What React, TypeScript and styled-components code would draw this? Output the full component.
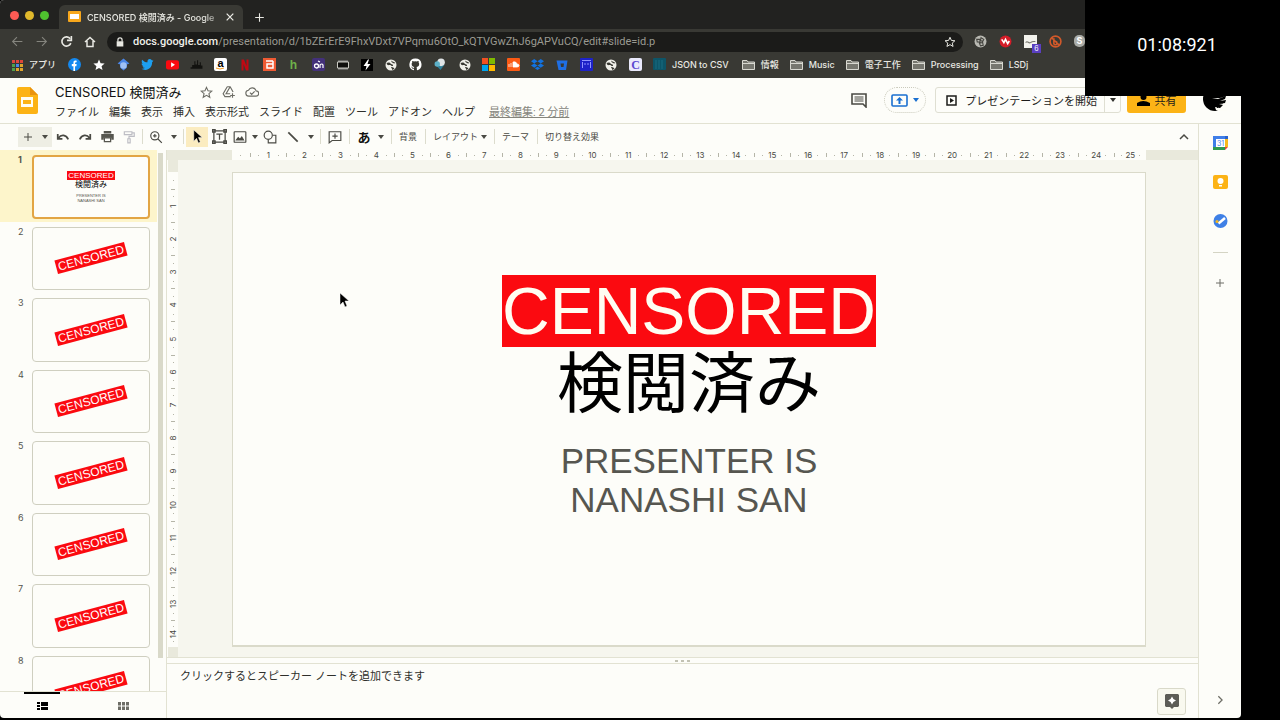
import React from "react";
import styled, { createGlobalStyle, css } from "styled-components";

const c = {
  page: "#fdfdf9",
  ink: "#2f2f2b",
  mute: "#6d6d66",
  line: "#e2e2d2",
  frame: "#222220",
  chrome: "#393934",
  field: "#1b1b19",
  canvas: "#f6f6ee",
  ruler: "#e9e9dc",
  red: "#fb0a10",
  amber: "#fcb316",
};

const Global = createGlobalStyle`
  *, *::before, *::after { box-sizing: border-box; }
  body { margin: 0; background: #000; color: ${c.ink}; overflow: hidden;
    font-family: Inter, "Noto Sans CJK JP", sans-serif; font-size: 11px; }
  button, input { font: inherit; color: inherit; border: 0; padding: 0; margin: 0; background: none; }
  a { color: inherit; text-decoration: none; }
  ul, ol { list-style: none; margin: 0; padding: 0; }
  h1, h2, p { margin: 0; font-weight: 400; }
  svg { display: block; flex: none; }
`;

const Screen = styled.div`
  display: flex;
  height: 100vh;
  padding: 0 39px 2px 0;
  background: #000;
`;
const Window = styled.div`
  flex: 1;
  min-width: 0;
  display: flex;
  flex-direction: column;
  overflow: hidden;
  background: ${c.page};
  border-radius: 4px;
`;
const Row = styled.div`
  display: flex;
  align-items: center;
`;

/* ---------- browser ---------- */
const TabStrip = styled(Row)`
  flex: none;
  height: 29px;
  padding: 5px 10px 0;
  background: ${c.frame};
  color: #e8e8e2;
`;
const Lights = styled(Row)`
  gap: 6px;
  width: 49px;
  padding-bottom: 4px;
`;
const Light = styled.span<{ $color: string }>`
  width: 9px;
  height: 9px;
  border-radius: 50%;
  background: ${(p) => p.$color};
`;
const Tab = styled(Row)`
  width: 184px;
  height: 24px;
  padding: 0 8px 0 9px;
  gap: 6px;
  border-radius: 6px 6px 0 0;
  background: ${c.chrome};
`;
const TabTitle = styled.span`
  flex: 1;
  min-width: 0;
  white-space: nowrap;
  font-size: 9px;
  font-weight: 500;
  mask-image: linear-gradient(90deg, #000 88%, #0006);
`;
const IconButton = styled.button<{ $w?: number; $h?: number }>`
  display: flex;
  flex: none;
  align-items: center;
  justify-content: center;
  width: ${(p) => p.$w ?? 22}px;
  height: ${(p) => p.$h ?? 20}px;
`;
const NavBar = styled(Row)`
  flex: none;
  height: 25px;
  padding-left: 5px;
  background: ${c.chrome};
  color: #e8e8e2;
`;
const DimIcon = styled.span`
  color: #85857e;
`;
const Address = styled.div`
  display: flex;
  align-items: center;
  flex: 1;
  min-width: 0;
  max-width: 856px;
  height: 20px;
  margin-left: 5px;
  padding: 0 4px 0 8px;
  gap: 8px;
  border-radius: 10px;
  background: ${c.field};
  font-family: Roboto, sans-serif;
  font-size: 11px;
`;
const Url = styled.span`
  flex: 1;
  white-space: nowrap;
  color: #9a9a92;
  b { font-weight: 500; color: #f0f0ea; }
`;
const Extensions = styled(Row)`
  margin-left: 5px;
`;
const Bookmarks = styled(Row)`
  flex: none;
  height: 24px;
  padding: 0 0 3px 11px;
  background: ${c.chrome};
  color: #e8e8e2;
  font-size: 9px;
  font-weight: 500;
  white-space: nowrap;
`;
const Apps = styled.a`
  display: flex;
  align-items: center;
  gap: 6px;
  width: 51px;
`;
const Sites = styled.nav`
  display: flex;
  justify-content: space-between;
  width: 598px;
  margin-left: 6px;
`;
const Site = styled.a`
  display: flex;
  width: 13px;
  height: 13px;
  justify-content: center;
  align-items: center;
`;
const JsonLink = styled.a`
  margin: 0 2px 0 6px;
`;
const Folder = styled.a`
  display: flex;
  align-items: center;
  gap: 6px;
  margin-left: 11px;
`;

/* ---------- document header ---------- */
const Header = styled.header`
  display: flex;
  flex: none;
  height: 46px;
  padding: 0 14px 0 17px;
  border-bottom: 1px solid ${c.line};
`;
const LogoBox = styled.span`
  padding-top: 9px;
`;
const Titles = styled.div`
  flex: 1;
  min-width: 0;
  padding: 5px 0 0 17px;
`;
const TitleRow = styled(Row)`
  height: 18px;
  gap: 9px;
  color: ${c.mute};
`;
const Title = styled.h1`
  margin-right: 9px;
  color: #111;
  font-size: 13px;
  line-height: 18px;
  white-space: nowrap;
`;
const Menu = styled.nav`
  display: flex;
  align-items: center;
  gap: 10px;
  height: 22px;
  white-space: nowrap;
`;
const MenuItem = styled.button`
  font-size: 11px;
  line-height: 16px;
`;
const LastEdit = styled.a`
  margin: 0 0 3px 4px;
  font-family: Roboto, "Noto Sans CJK JP", sans-serif;
  font-size: 11px;
  color: #85857c;
  text-decoration: underline;
`;
const Actions = styled.div`
  display: flex;
  align-items: flex-start;
  padding-top: 9px;
`;
const Pill = styled.button`
  display: flex;
  align-items: center;
  justify-content: center;
  gap: 5px;
  width: 42px;
  height: 26px;
  margin: 0 9px 0 15px;
  border: 1px dotted #c9c9bb;
  border-radius: 13px;
  color: #1a6fd0;
`;
const Split = styled.div`
  display: flex;
  height: 26px;
  border: 1px solid #dfdfd2;
  border-radius: 3px;
`;
const Present = styled.button`
  display: flex;
  align-items: center;
  gap: 8px;
  padding: 0 7px 0 10px;
  border-right: 1px solid #dfdfd2;
  white-space: nowrap;
  color: #1c1c1a;
`;
const Share = styled.button`
  display: flex;
  align-items: center;
  justify-content: center;
  gap: 5px;
  width: 59px;
  height: 26px;
  margin: 0 17px 0 6px;
  border-radius: 3px;
  background: ${c.amber};
  color: #1c1c1a;
`;

/* ---------- toolbar ---------- */
const Below = styled.div`
  flex: 1;
  min-height: 0;
  display: flex;
`;
const Editor = styled.div`
  flex: 1;
  min-width: 0;
  display: flex;
  flex-direction: column;
`;
const Toolbar = styled(Row)`
  flex: none;
  height: 26px;
  padding: 0 3px 1px 18px;
  color: #4a4a44;
`;
const Tool = styled(IconButton)<{ $bg?: string }>`
  background: ${(p) => p.$bg ?? "none"};
`;
const ToolPair = styled.span`
  display: flex;
  align-items: center;
  gap: 8px;
`;
const TextTool = styled.button<{ $caret?: boolean }>`
  display: flex;
  align-items: center;
  gap: 3px;
  padding: 0 ${(p) => (p.$caret ? 3 : 4)}px 0 4px;
  font-size: 9px;
  white-space: nowrap;
`;
const Sep = styled.span<{ $w: number }>`
  display: flex;
  justify-content: center;
  width: ${(p) => p.$w}px;
  &::before { content: ""; width: 1px; height: 15px; background: #dcdccd; }
`;
const Kana = styled.b`
  font-size: 13px;
  color: #111;
`;
const Grow = styled.span`
  flex: 1;
`;

/* ---------- filmstrip ---------- */
const Work = styled.div`
  flex: 1;
  min-height: 0;
  display: flex;
`;
const Film = styled.aside`
  display: flex;
  flex-direction: column;
  flex: none;
  width: 167px;
  border-right: 1px solid ${c.line};
`;
const FilmBody = styled.div`
  flex: 1;
  min-height: 0;
  display: flex;
  overflow: hidden;
`;
const Scroll = styled.span`
  width: 5px;
  height: 505px;
  margin: 3px 0 0 1px;
  background: #d9d9c9;
`;
const SlideList = styled.ol`
  display: grid;
  grid-template-rows: repeat(8, 1fr);
  height: 572px;
  width: 157px;
`;
const SlideItem = styled.li<{ $on?: boolean }>`
  display: flex;
  padding: 5px 7px 3px 0;
  background: ${(p) => (p.$on ? "#fdf5cb" : "none")};
`;
const Num = styled.span<{ $on?: boolean }>`
  width: 32px;
  padding-left: 18px;
  font-size: 9px;
  line-height: 10px;
  font-weight: ${(p) => (p.$on ? 700 : 400)};
  color: #55554e;
`;
const Thumb = styled.button<{ $on?: boolean }>`
  display: flex;
  flex: 1;
  flex-direction: column;
  align-items: center;
  justify-content: center;
  border: ${(p) => (p.$on ? "2px solid #e2a544" : "1px solid #cfcfc0")};
  border-radius: 4px;
  background: ${c.page};
  font-family: "Liberation Sans", "Noto Sans CJK JP", sans-serif;
`;
const Stamp = styled.span`
  padding: 0 2px;
  background: ${c.red};
  color: #fff;
  font-size: 12px;
  line-height: 14px;
  transform: rotate(-15deg);
`;
const MiniTag = styled.span`
  padding: 0 1px;
  background: ${c.red};
  color: #fff;
  font-size: 8px;
  line-height: 9px;
`;
const MiniTitle = styled.span`
  font-size: 8px;
  line-height: 10px;
  color: #000;
`;
const MiniSub = styled.span`
  padding-top: 3px;
  font-size: 4px;
  line-height: 5px;
  color: #55554e;
`;
const ViewBar = styled.div`
  display: flex;
  flex: none;
  height: 27px;
  padding-left: 24px;
  border-top: 1px solid ${c.line};
`;
const View = styled.button<{ $on?: boolean }>`
  display: flex;
  flex: none;
  align-items: center;
  justify-content: center;
  width: 36px;
  margin-right: 45px;
  border-top: 2px solid ${(p) => (p.$on ? "#000" : "transparent")};
  color: ${(p) => (p.$on ? "#000" : c.mute)};
`;

/* ---------- stage ---------- */
const Stage = styled.main`
  flex: 1;
  min-width: 0;
  display: flex;
  flex-direction: column;
  font-family: "Liberation Sans", "Noto Sans CJK JP", sans-serif;
`;
const HRuler = styled.div`
  display: flex;
  flex: none;
  height: 10px;
  padding: 0 52px 0 65px;
  background: ${c.ruler};
`;
const VRuler = styled.div`
  display: flex;
  flex-direction: column;
  flex: none;
  width: 10px;
  margin-left: 1px;
  padding: 12px 0 10px;
  background: ${c.ruler};
`;
const Cell = styled.span<{ $v?: boolean; $size: number }>`
  display: flex;
  flex: ${(p) => p.$size} 1 0;
  flex-direction: ${(p) => (p.$v ? "column" : "row")};
  min-width: 0;
  min-height: 0;
  align-items: center;
  justify-content: space-between;
  background: ${c.page};
  font-family: Inter, sans-serif;
  font-size: 8px;
  line-height: 8px;
  color: #4a4a44;
`;
const Tick = styled.i<{ $v?: boolean; $long?: boolean }>`
  flex: none;
  background: #b5b5a8;
  ${(p) => {
    const len = p.$long ? 4 : 1;
    return p.$v
      ? css`height: 1px; width: ${len}px;`
      : css`width: 1px; height: ${len}px;`;
  }}
`;
const Mark = styled.span<{ $v?: boolean }>`
  display: flex;
  flex: none;
  align-items: center;
  justify-content: center;
  width: 4px;
  height: 4px;
  transform: rotate(${(p) => (p.$v ? -90 : 0)}deg);
`;
const CanvasRow = styled.div`
  flex: 1;
  min-height: 0;
  display: flex;
`;
const Canvas = styled.div`
  flex: 1;
  min-width: 0;
  display: flex;
  padding: 12px 52px 10px 54px;
  background: ${c.canvas};
`;
const Slide = styled.section`
  flex: 1;
  display: flex;
  flex-direction: column;
  align-items: center;
  justify-content: center;
  padding-bottom: 25px;
  border: 1px solid #dadaca;
  border-bottom-width: 2px;
  background: ${c.page};
  text-align: center;
`;
const Censored = styled.h2`
  background: ${c.red};
  color: #fffdf2;
  font-size: 66px;
  line-height: 72px;
`;
const Heading = styled.h2`
  color: #000;
  font-size: 66px;
  line-height: 74px;
`;
const Presenter = styled.p`
  padding-top: 20px;
  color: #565650;
  font-size: 35px;
  line-height: 39px;
`;
const Handle = styled(Row)`
  flex: none;
  justify-content: center;
  gap: 3px;
  height: 7px;
  border: 1px solid ${c.line};
  border-width: 1px 0;
  span { width: 3px; height: 2px; background: #c2c2b3; }
`;
const Notes = styled.div`
  display: flex;
  flex: none;
  height: 54px;
  padding: 4px 12px 0 13px;
  p { flex: 1; font-size: 11px; line-height: 16px; }
`;
const Explore = styled.button`
  display: flex;
  align-items: center;
  justify-content: center;
  width: 29px;
  height: 27px;
  margin-top: 20px;
  border: 1px solid #d9d9c9;
  border-radius: 3px;
  background: #f9f9ef;
`;

/* ---------- side panel ---------- */
const Side = styled.aside`
  display: flex;
  flex-direction: column;
  align-items: center;
  flex: none;
  width: 43px;
  padding-top: 9px;
  border-left: 1px solid ${c.line};
  color: ${c.mute};
  button { margin-bottom: 19px; }
  hr { width: 15px; margin: 2px 0 20px; border: 0; border-top: 1px solid #d4d4c4; }
  button:last-child { margin-top: auto; margin-bottom: 8px; }
`;

/* ---------- overlays ---------- */
const Clock = styled.div`
  position: absolute;
  top: 0;
  right: 0;
  display: flex;
  align-items: center;
  justify-content: center;
  width: 195px;
  height: 96px;
  padding: 0 11px 7px 0;
  background: #000;
  color: #fff;
  font-family: Roboto, sans-serif;
  font-size: 18px;
  line-height: 24px;
`;
const Pointer = styled.span`
  position: absolute;
  left: 337px;
  top: 293px;
`;
const Badge = styled.span`
  position: absolute;
  right: -4px;
  bottom: -5px;
  width: 9px;
  height: 9px;
  background: #5a3fc0;
  color: #fff;
  font-size: 7px;
  line-height: 9px;
`;
const Ext = styled.button`
  position: relative;
  display: flex;
  width: 13px;
  height: 13px;
  margin: 0 6px;
`;

/* ---------- drawings ---------- */
type IcoProps = { s?: number; w?: number; children: React.ReactNode; fill?: string };
const Ico = ({ s = 14, w = 2, fill = "none", children }: IcoProps) => (
  <svg width={s} height={s} viewBox="0 0 24 24" fill={fill} stroke={fill === "none" ? "currentColor" : "none"} strokeWidth={w} aria-hidden="true">
    {children}
  </svg>
);
const Caret = () => (
  <svg width="6" height="4" viewBox="0 0 6 4" aria-hidden="true"><path d="M0 0h6L3 4z" fill="currentColor" /></svg>
);
const Star = ({ s = 13 }: { s?: number }) => (
  <Ico s={s}><path d="M12 2.5l2.800 6.400 7 .6-5.300 4.600 1.600 6.800L12 17.300l-6.100 3.600 1.600-6.800L2.200 9.500l7-.6z" /></Ico>
);
const Plus = ({ s = 14 }: { s?: number }) => <Ico s={s}><path d="M12 4v16M4 12h16" /></Ico>;
const SlidesMark = () => (
  <svg width="13" height="12" viewBox="0 0 13 12" aria-hidden="true">
    <rect width="13" height="11" rx="1" fill="#f8a81c" /><rect x="2" y="3" width="9" height="5" fill="#fff" />
  </svg>
);
const Arrow = ({ d = 0 }: { d?: number }) => (
  <svg width="13" height="13" viewBox="0 0 24 24" fill="none" stroke="currentColor" strokeWidth="2" aria-hidden="true">
    <g transform={`rotate(${d} 12 12)`}><path d="M21 12H4M11 4l-8 8 8 8" /></g>
  </svg>
);
const Pointy = ({ s = 13 }: { s?: number }) => (
  <svg width={s} height={s} viewBox="0 0 12 14" aria-hidden="true">
    <path d="M2 0v12l3-3 2 5 2-1-2-5h4z" fill="#000" stroke="#fff" strokeWidth=".5" />
  </svg>
);
const FolderIcon = () => (
  <svg width="13" height="12" viewBox="0 0 13 12" aria-hidden="true">
    <path d="M.5 10.500V1.500H5l1 1.500h6.500v7.500z" fill="#77776f" stroke="#d8d8d0" />
    <path d="M.5 4.500h12" stroke="#d8d8d0" />
  </svg>
);
const Globe = () => (
  <Ico s={12} fill="#f0f0ea">
    <circle cx="12" cy="12" r="11" />
    <path d="M3 8c4-2 7-1 8 1s4 1 5 3-2 3-4 1-5 0-7-1zM13 3c1 3 5 2 8 5l-3 1c-2-2-6-1-5-6zM12 16c3 0 5 1 7 3l-4 3z" fill="#393933" />
  </Ico>
);

const siteIcons: [string, React.ReactNode][] = [
  ["Facebook", <Ico s={13} fill="#1489f0"><circle cx="12" cy="12" r="12" /><path d="M10 24v-9H7v-4h3V9c0-4 2-5 6-4v3c-2 0-3 0-3 2v1h3l-.5 4H13v9z" fill="#fff" /></Ico>],
  ["Favorites", <Ico s={12} fill="#fff"><path d="M12 1l3.200 7.500 8 .7-6.100 5.200 2 7.800L12 18l-7.100 4.200 2-7.800L.8 9.200l8-.7z" /></Ico>],
  ["Scholar", <Ico s={13} fill="#4a86e8"><path d="M12 1l11 9-5 2v6l-6 5-6-5v-6l-5-2z" /><circle cx="12" cy="14" r="6" fill="#9fc0f5" /></Ico>],
  ["Twitter", <Ico s={13} fill="#1d9ff0"><path d="M23 5l-2.500 3C21 16 15 22 8 22c-3 0-5-1-7-2 3 0 5-1 6-2-2 0-4-1-4-3h2c-3-1-4-3-4-5l2 .5C1 8 1 5 2 3c3 3 6 5 10 5-1-6 5-8 8-4z" /></Ico>],
  ["YouTube", <Ico s={13} fill="#fb0a10"><rect x="0" y="4" width="24" height="17" rx="4" /><path d="M9.500 8v9l7-4.500z" fill="#fff" /></Ico>],
  ["Radio", <Ico s={13} fill="#12120f"><path d="M1 20h22v-6h-3V8h-2v5h-3V4h-2v8h-3V6H8v7H4v4H1z" /></Ico>],
  ["Amazon", <svg width="13" height="13" viewBox="0 0 13 13"><rect width="13" height="13" rx="2" fill="#fff" /><text x="6.500" y="9" fontSize="11" fontWeight="700" textAnchor="middle" fontFamily="Liberation Sans">a</text><path d="M2 10q4 2 8 0" stroke="#f59a1c" fill="none" /></svg>],
  ["Netflix", <Ico s={12} fill="#c20812"><path d="M5 1h5l5 13V1h4v22h-5L9 10v13H5z" /></Ico>],
  ["dアニメ", <svg width="13" height="13" viewBox="0 0 13 13"><rect width="13" height="13" fill="#ee5a33" /><path d="M3 3l7 0M10 3v7H4V6h6" stroke="#fff" strokeWidth="1.500" fill="none" /></svg>],
  ["Hulu", <svg width="13" height="13" viewBox="0 0 13 13"><text x="6.500" y="11" fontSize="12" fontWeight="700" textAnchor="middle" fill="#6fb24a" fontFamily="Liberation Sans">h</text></svg>],
  ["on", <svg width="13" height="13" viewBox="0 0 13 13"><rect width="13" height="13" rx="2" fill="#43307a" /><circle cx="4.500" cy="8" r="2" fill="none" stroke="#fff" strokeWidth="1.300" /><path d="M8 10V7q2-2 3 0v3M6 3l2 1" stroke="#fff" strokeWidth="1.200" fill="none" /></svg>],
  ["Chip", <Ico s={12} fill="#0f0f0d"><path d="M4 3v4M8 3v4M12 3v4M16 3v4M20 3v4M4 17v4M8 17v4M12 17v4M16 17v4M20 17v4" stroke="#eee" strokeWidth="2" /><path d="M1 6h22v12H1z" stroke="#c9c9c2" /></Ico>],
  ["Power", <Ico s={12} fill="#000"><rect width="24" height="24" /><path d="M14 1L5 14h6l-2 9 10-13h-6l3-9z" fill="#fff" /></Ico>],
  ["Web", <Globe />],
  ["GitHub", <Ico s={13} fill="#fff"><path d="M12 1a11 11 0 0 0-3.500 21.500c.6 0 .7-.3.7-.6v-2.200c-3 .7-3.700-1.300-3.700-1.300-.5-1.300-1.300-1.600-1.300-1.600-1-.7.1-.7.100-.7 1.100.1 1.700 1.200 1.700 1.200 1 1.700 2.600 1.200 3.200.9.1-.7.400-1.200.7-1.500-2.400-.3-5-1.200-5-5.400 0-1.200.4-2.200 1.100-3-.1-.3-.5-1.400.1-2.900 0 0 .9-.3 3 1.100a10 10 0 0 1 5.500 0c2.100-1.400 3-1.100 3-1.100.6 1.500.2 2.600.1 2.900.7.800 1.100 1.800 1.100 3 0 4.200-2.600 5.100-5 5.400.4.300.7 1 .7 2v3.200c0 .3.200.7.800.6A11 11 0 0 0 12 1z" /></Ico>],
  ["Weather", <Ico s={13} fill="#2f7f9a"><path d="M4 14l8 8 7-9z" /><circle cx="13" cy="8" r="7" fill="#dfe4e6" /><circle cx="6" cy="11" r="5" fill="#5cb0c8" /></Ico>],
  ["Web", <Globe />],
  ["Microsoft", <svg width="13" height="13" viewBox="0 0 13 13"><path d="M0 0h6v6H0z" fill="#f25022" /><path d="M7 0h6v6H7z" fill="#7fba00" /><path d="M0 7h6v6H0z" fill="#00a4ef" /><path d="M7 7h6v6H7z" fill="#ffb900" /></svg>],
  ["SoundCloud", <svg width="13" height="13" viewBox="0 0 13 13"><rect width="13" height="13" rx="1" fill="#fb5a14" /><path d="M2 6v3M4 5v4M6 9V4q3-1 4 2 2 0 2 1.500T10 9z" fill="#fff" stroke="#fff" strokeWidth=".8" /></svg>],
  ["Dropbox", <Ico s={13} fill="#1272e0"><path d="M6 2l6 4-6 4-6-4zM18 2l6 4-6 4-6-4zM6 10l6 4-6 4-6-4zM18 10l6 4-6 4-6-4zM12 16l5 3-5 3-5-3z" /></Ico>],
  ["Bitbucket", <Ico s={12} fill="#1f6fe5"><path d="M1 3h22l-3 19H5zM9 9l1 7h5l1-7z" fillRule="evenodd" /></Ico>],
  ["Game", <svg width="13" height="13" viewBox="0 0 13 13"><rect width="13" height="13" rx="1" fill="#1d22c8" /><path d="M2 2.500h9M2.500 4v6M10.500 4v6M4 6h2M7 6h2" stroke="#8f94ff" /></svg>],
  ["Web", <Globe />],
  ["C", <svg width="13" height="13" viewBox="0 0 13 13"><rect width="13" height="13" rx="2" fill="#e9e9fb" /><text x="6.500" y="11" fontSize="12" fontWeight="700" textAnchor="middle" fill="#5a48d0" fontFamily="Liberation Serif">C</text></svg>],
  ["JSON", <svg width="13" height="13" viewBox="0 0 13 13"><rect width="13" height="12" rx="1" fill="#0d5568" /><path d="M3 2v9M6 2v9M9 2v9" stroke="#1a6d80" /></svg>],
];

const menus = ["ファイル", "編集", "表示", "挿入", "表示形式", "スライド", "配置", "ツール", "アドオン", "ヘルプ"];
const folders = ["情報", "Music", "電子工作", "Processing", "LSDj"];

const Scale = ({ count, tail, v }: { count: number; tail: number; v?: boolean }) => (
  <>
    <Cell $v={v} $size={0.5}><i /><Tick $v={v} /><i /></Cell>
    {Array.from({ length: count }, (_, i) => (
      <Cell key={i} $v={v} $size={i === count - 1 ? tail : 1}>
        <Tick $v={v} $long />
        <Tick $v={v} />
        <Mark $v={v}>{i + 1}</Mark>
        <Tick $v={v} />
        <i />
      </Cell>
    ))}
  </>
);

const Browser = () => (
  <>
    <TabStrip>
      <Lights><Light $color="#fb5b54" /><Light $color="#e0b92c" /><Light $color="#4fc12f" /></Lights>
      <Tab>
        <SlidesMark />
        <TabTitle>CENSORED 検閲済み - Google</TabTitle>
        <IconButton $w={10} aria-label="タブを閉じる"><Ico s={10} w={3}><path d="M4 4l16 16M20 4L4 20" /></Ico></IconButton>
      </Tab>
      <IconButton $w={32} aria-label="新しいタブ"><Plus s={13} /></IconButton>
    </TabStrip>
    <NavBar>
      <IconButton $w={24} aria-label="戻る"><DimIcon><Arrow /></DimIcon></IconButton>
      <IconButton $w={25} aria-label="進む"><DimIcon><Arrow d={180} /></DimIcon></IconButton>
      <IconButton $w={24} aria-label="再読み込み"><Ico s={13} w={3}><path d="M20 15a8.500 8.500 0 1 1-1-8" /><path d="M21 2v8h-8" /></Ico></IconButton>
      <IconButton $w={24} aria-label="ホーム"><Ico s={12} w={3}><path d="M2 12L12 3l10 9M6 10v11h12V10" /></Ico></IconButton>
      <Address>
        <Ico s={10} fill="#e8e8e2"><path d="M4 10h16v13H4z" /><path d="M7 11V7a5 5 0 0 1 10 0v4" fill="none" stroke="#e8e8e2" strokeWidth="3" /></Ico>
        <Url><b>docs.google.com</b>/presentation/d/1bZErErE9FhxVDxt7VPqmu6OtO_kQTVGwZhJ6gAPVuCQ/edit#slide=id.p</Url>
        <IconButton $w={18} aria-label="ブックマーク"><Star s={12} /></IconButton>
      </Address>
      <Extensions>
        <Ext aria-label="拡張機能 1"><Ico s={13} fill="#b9b9b2"><circle cx="12" cy="12" r="11" /><path d="M5 8h6v5H6zM13 5l5 3-2 4-4-2zM10 15l6-1 1 5-5 1z" fill="none" stroke="#44443f" strokeWidth="2" /></Ico></Ext>
        <Ext aria-label="拡張機能 2"><Ico s={13} fill="#d51c28"><circle cx="12" cy="12" r="11" /><path d="M5 8l4 6 3-6 4 8 3-5" fill="none" stroke="#fff" strokeWidth="3" /></Ico></Ext>
        <Ext aria-label="拡張機能 3"><Ico s={13} fill="#f2f2ec"><rect width="24" height="24" /><path d="M3 14c4-5 5 3 9 0s5-2 9-2" fill="none" stroke="#77776f" strokeWidth="2" /></Ico><Badge>6</Badge></Ext>
        <Ext aria-label="拡張機能 4"><Ico s={13}><g stroke="#d2592a" strokeWidth="3"><circle cx="12" cy="12" r="10" /><path d="M9 6v10a3 3 0 1 0 3-4M5 5l14 14" /></g></Ico></Ext>
        <Ext aria-label="拡張機能 5"><svg width="13" height="13" viewBox="0 0 13 13"><rect width="11" height="12" rx="5" fill="#a9aba6" /><text x="5.500" y="9" fontSize="9" fontWeight="700" textAnchor="middle" fill="#fff">S</text></svg></Ext>
      </Extensions>
    </NavBar>
    <Bookmarks>
      <Apps href="#apps">
        <svg width="12" height="12" viewBox="0 0 12 12">
          {["#e0453a", "#e0453a", "#e0453a", "#4fa04a", "#4a86e8", "#e0a52c", "#4fa04a", "#e0a52c", "#e0a52c"].map((f, i) => (
            <rect key={i} x={1 + (i % 3) * 4} y={1 + Math.floor(i / 3) * 4} width="3" height="3" fill={f} />
          ))}
        </svg>
        アプリ
      </Apps>
      <Sites>
        {siteIcons.map(([name, icon], i) => <Site key={i} href="#site" aria-label={name}>{icon}</Site>)}
      </Sites>
      <JsonLink href="#json">JSON to CSV</JsonLink>
      {folders.map((f) => <Folder key={f} href="#folder"><FolderIcon />{f}</Folder>)}
    </Bookmarks>
  </>
);

const DocHeader = () => (
  <Header>
    <LogoBox>
      <svg width="21" height="27" viewBox="0 0 21 27" aria-hidden="true">
        <path d="M2 0h11l8 8v17a2 2 0 0 1-2 2H2a2 2 0 0 1-2-2V2a2 2 0 0 1 2-2z" fill={c.amber} />
        <path d="M13 0l8 8h-8z" fill="#ea930f" />
        <path d="M4 10h12v10H4zM6 13v4h8v-4z" fill="#fffdf2" fillRule="evenodd" />
      </svg>
    </LogoBox>
    <Titles>
      <TitleRow>
        <Title>CENSORED 検閲済み</Title>
        <Star />
        <Ico s={14}><path d="M9 3h5l5 9M9 3L2 15l3 5h10M14 3l-7 12h7M18 14v8M14 18h8" /></Ico>
        <Ico s={14}><path d="M7 19a5 5 0 0 1-1-10 7 7 0 0 1 13 1 4.500 4.500 0 0 1 0 9zM8.500 13l3 3 5-5" /></Ico>
      </TitleRow>
      <Menu>
        {menus.map((m) => <MenuItem key={m}>{m}</MenuItem>)}
        <LastEdit href="#history">最終編集: 2 分前</LastEdit>
      </Menu>
    </Titles>
    <Actions>
      <IconButton $w={20} $h={26} aria-label="コメント">
        <svg width="16" height="15" viewBox="0 0 16 15"><path d="M1 1h14v13l-3-3H1z" fill="none" stroke="#4a4a44" strokeWidth="1.600" /><path d="M3.500 4h9M3.500 6h9M3.500 8h9" stroke="#4a4a44" /></svg>
      </IconButton>
      <Pill aria-label="会議で画面を共有">
        <svg width="17" height="13" viewBox="0 0 17 13"><rect x="1" y="1" width="15" height="11" rx="1" fill="none" stroke="currentColor" strokeWidth="1.600" /><path d="M8.500 3L12 6.500H9.500V10h-2V6.500H5z" fill="currentColor" /></svg>
        <Caret />
      </Pill>
      <Split>
        <Present>
          <svg width="11" height="11" viewBox="0 0 11 11"><rect x="1" y="1" width="9" height="9" fill="none" stroke="currentColor" strokeWidth="1.500" /><path d="M4 3l4 2.500L4 8z" fill="currentColor" /></svg>
          プレゼンテーションを開始
        </Present>
        <IconButton $w={15} $h={24} aria-label="その他の表示"><Caret /></IconButton>
      </Split>
      <Share>
        <svg width="13" height="12" viewBox="0 0 13 12"><circle cx="6.500" cy="3" r="3" /><path d="M0 12V9q6-4 13 0v3z" /></svg>
        共有
      </Share>
      <IconButton $w={24} $h={24} aria-label="アカウント">
        <svg width="24" height="24" viewBox="0 0 24 24">
          <circle cx="12" cy="12" r="12" fill="#000" />
          <path d="M9 11l6 1 8-3-1 3-5 2 6-1-1 3-6 1 4 1-3 3-5-1 1 3 2 1h9V6l-1 3-6 2z" fill="#fdfdf7" />
          <path d="M12 14q3 3 8 2M13 18q2 2 4 2M11 16l4 5" stroke="#000" strokeWidth="1" fill="none" />
        </svg>
      </IconButton>
    </Actions>
  </Header>
);

const Tools = () => (
  <Toolbar role="toolbar">
    <Tool $w={34} $bg="#eeeee4" aria-label="新しいスライド"><ToolPair><Plus s={12} /><Caret /></ToolPair></Tool>
    <Tool aria-label="元に戻す"><Ico s={14} w={3}><path d="M3 7v8h8M4 14c5-7 13-6 17 2" /></Ico></Tool>
    <Tool aria-label="やり直し"><Ico s={14} w={3}><path d="M21 7v8h-8M20 14C15 7 7 8 3 16" /></Ico></Tool>
    <Tool aria-label="印刷"><Ico s={15} fill="#55554e"><path d="M6 3h12v4H6zM2 8h20v9h-4v-3H6v3H2z" /><path d="M7 14h10v6H7z" fill="none" stroke="#55554e" strokeWidth="2" /></Ico></Tool>
    <Tool aria-label="書式をコピー"><Ico s={14}><g stroke="#bdbdc4" strokeWidth="2"><path d="M4 3h13v5H4zM17 5h4v6h-9v4M10 15h4v7h-4z" /></g></Ico></Tool>
    <Sep $w={5} />
    <Tool aria-label="ズーム"><Ico s={14}><circle cx="10" cy="10" r="7" /><path d="M15 15l7 7M10 7v6M7 10h6" /></Ico></Tool>
    <Tool $w={14} aria-label="ズーム倍率"><Caret /></Tool>
    <Sep $w={5} />
    <Tool $bg="#fbecc0" aria-label="選択"><Pointy /></Tool>
    <Tool aria-label="テキスト ボックス"><Ico s={15}><rect x="3" y="3" width="18" height="18" /><path d="M7 8h10M12 8v9" /><path d="M1 1h4v4H1zM19 1h4v4h-4zM1 19h4v4H1zM19 19h4v4h-4z" /></Ico></Tool>
    <Tool $w={20} aria-label="画像"><Ico s={14}><rect x="2" y="3" width="20" height="18" rx="1" /><path d="M6 17l3-4 3 3 3-4 3 5z" fill="currentColor" /></Ico></Tool>
    <Tool $w={9} aria-label="画像メニュー"><Caret /></Tool>
    <Tool aria-label="図形"><Ico s={14}><circle cx="9" cy="9" r="7" /><path d="M17 9h5v13H9v-5" /></Ico></Tool>
    <Tool $w={24} aria-label="線"><Ico s={14} w={3}><path d="M4 4l16 16" /></Ico></Tool>
    <Tool $w={12} aria-label="線メニュー"><Caret /></Tool>
    <Sep $w={7} />
    <Tool aria-label="コメントを追加"><Ico s={14}><path d="M2 3h20v15H7l-5 4zM12 6v9M7.500 10.500h9" /></Ico></Tool>
    <Sep $w={7} />
    <Tool aria-label="入力ツール"><Kana>あ</Kana></Tool>
    <Tool $w={12} aria-label="入力メニュー"><Caret /></Tool>
    <Sep $w={8} />
    <TextTool>背景</TextTool>
    <Sep $w={8} />
    <TextTool $caret>レイアウト<Caret /></TextTool>
    <Sep $w={8} />
    <TextTool>テーマ</TextTool>
    <Sep $w={8} />
    <TextTool>切り替え効果</TextTool>
    <Grow />
    <Tool aria-label="メニューを非表示"><Ico s={12} w={3}><path d="M4 16l8-8 8 8" /></Ico></Tool>
  </Toolbar>
);

export default function App() {
  return (
    <Screen>
      <Global />
      <Window>
        <Browser />
        <DocHeader />
        <Below>
          <Editor>
            <Tools />
            <Work>
              <Film>
                <FilmBody>
                  <SlideList>
                    {[1, 2, 3, 4, 5, 6, 7, 8].map((n) => (
                      <SlideItem key={n} $on={n === 1}>
                        <Num $on={n === 1}>{n}</Num>
                        <Thumb $on={n === 1}>
                          {n === 1 ? (
                            <>
                              <MiniTag>CENSORED</MiniTag>
                              <MiniTitle>検閲済み</MiniTitle>
                              <MiniSub>PRESENTER IS<br />NANASHI SAN</MiniSub>
                            </>
                          ) : (
                            <Stamp>CENSORED</Stamp>
                          )}
                        </Thumb>
                      </SlideItem>
                    ))}
                  </SlideList>
                  <Scroll />
                </FilmBody>
                <ViewBar>
                  <View $on aria-label="フィルムストリップ表示"><svg width="11" height="8" viewBox="0 0 11 8" fill="currentColor"><path d="M0 0h3v2H0zM0 3h3v2H0zM0 6h3v2H0zM4 0h7v4H4zM4 5h7v3H4z" /></svg></View>
                  <View aria-label="グリッド表示"><svg width="11" height="8" viewBox="0 0 11 8" fill="currentColor"><path d="M0 0h3v3.500H0zM4 0h3v3.500H4zM8 0h3v3.500H8zM0 4.500h3V8H0zM4 4.500h3V8H4zM8 4.500h3V8H8z" /></svg></View>
                </ViewBar>
              </Film>
              <Stage>
                <HRuler><Scale count={25} tail={0.9} /></HRuler>
                <CanvasRow>
                  <VRuler><Scale v count={14} tail={0.8} /></VRuler>
                  <Canvas>
                    <Slide>
                      <Censored>CENSORED</Censored>
                      <Heading>検閲済み</Heading>
                      <Presenter>PRESENTER IS<br />NANASHI SAN</Presenter>
                    </Slide>
                  </Canvas>
                </CanvasRow>
                <Handle><span /><span /><span /></Handle>
                <Notes>
                  <p>クリックするとスピーカー ノートを追加できます</p>
                  <Explore aria-label="データ探索"><svg width="14" height="15" viewBox="0 0 14 15"><path d="M1 0h12l1 1v11l-1 1H9l-2 2-2-2H1l-1-1V1z" fill="#5c5c56" /><path d="M7 2.500l1.400 2.600L11 6.500 8.400 7.900 7 10.500 5.600 7.900 3 6.500l2.600-1.400z" fill="#fff" /></svg></Explore>
                </Notes>
              </Stage>
            </Work>
          </Editor>
          <Side>
            <IconButton aria-label="カレンダー"><svg width="15" height="14" viewBox="0 0 15 14"><path d="M0 0h12v14H0z" fill="#3f7ee8" /><path d="M12 3h3v8h-3z" fill="#f8b91c" /><path d="M12 0h3v3h-3z" fill="#2a62cc" /><path d="M0 11h12v3H0z" fill="#2e9a50" /><path d="M12 11h3l-3 3z" fill="#e4463a" /><rect x="3" y="3" width="9" height="8" fill="#fff" /><text x="7.500" y="9.500" fontSize="7" textAnchor="middle" fill="#3f7ee8">31</text></svg></IconButton>
            <IconButton aria-label="Keep"><svg width="15" height="14" viewBox="0 0 15 14"><rect width="15" height="14" rx="2" fill={c.amber} /><circle cx="7.500" cy="6" r="3" fill="#fff" /><path d="M6 10h3v1.500H6z" fill="#fff" /></svg></IconButton>
            <IconButton aria-label="ToDo リスト"><svg width="15" height="14" viewBox="0 0 15 14"><circle cx="7.500" cy="7" r="7" fill="#3f80e6" /><path d="M5.500 9.500L12 4" stroke="#fff" strokeWidth="2.500" /><circle cx="4" cy="7.500" r="1.500" fill="#f8b91c" /></svg></IconButton>
            <hr />
            <IconButton aria-label="アドオンを取得"><Plus s={12} /></IconButton>
            <IconButton aria-label="サイドパネルを非表示"><Ico s={10} w={3}><path d="M8 3l9 9-9 9" /></Ico></IconButton>
          </Side>
        </Below>
      </Window>
      <Clock>01:08:921</Clock>
      <Pointer><Pointy s={14} /></Pointer>
    </Screen>
  );
}
